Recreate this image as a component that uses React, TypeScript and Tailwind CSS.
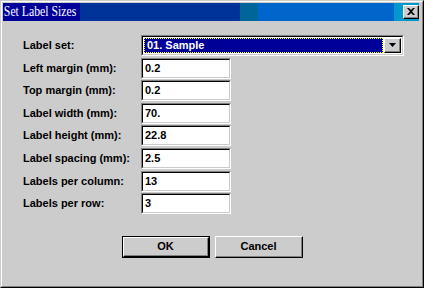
import React from "react";

const labelCls =
  "text-[11px] font-bold text-black leading-none whitespace-nowrap flex items-center";
const font = { fontFamily: '"Liberation Sans", Arial, sans-serif' };

function Field({ value }: { value: string }) {
  return (
    <div className="w-[90px] h-[21px] border-t border-l border-[#808080] border-r border-b border-r-white border-b-white">
      <div className="w-full h-full bg-white border-t border-l border-black border-r border-b border-r-[#cccccc] border-b-[#cccccc] flex items-center pl-[2px] text-[11px] font-bold text-black leading-none">
        {value}
      </div>
    </div>
  );
}

function Button({ label, def }: { label: string; def?: boolean }) {
  return (
    <div className={"w-[88px] h-[22px] " + (def ? "border border-black" : "")}>
      <div className="w-full h-full border-t border-l border-white border-r border-b border-r-black border-b-black">
        <div className="w-full h-full border-r border-b border-[#808080] flex items-center justify-center text-[11px] font-bold text-black leading-none">
          {label}
        </div>
      </div>
    </div>
  );
}

export default function App() {
  const rows: [string, string][] = [
    ["Left margin (mm):", "0.2"],
    ["Top margin (mm):", "0.2"],
    ["Label width (mm):", "70."],
    ["Label height (mm):", "22.8"],
    ["Label spacing (mm):", "2.5"],
    ["Labels per column:", "13"],
    ["Labels per row:", "3"],
  ];
  return (
    <div
      className="w-[424px] h-[288px] bg-[#cccccc] border-t border-l border-[#cccccc] border-r border-b border-r-black border-b-black"
      style={font}
    >
      <div className="w-full h-full border-t border-l border-white border-r border-b border-r-[#808080] border-b-[#808080] pt-px pl-px pr-[3px] flex flex-col">
        {/* Title bar */}
        <div className="h-[18px] flex w-full">
          <div className="w-[77px] bg-[#000099] flex items-center overflow-hidden">
            <span
              className="text-white text-[14px] leading-none pl-[1px] origin-left scale-x-[0.84] whitespace-nowrap"
              style={{ fontFamily: '"Liberation Serif", "Times New Roman", serif' }}
            >
              Set Label Sizes
            </span>
          </div>
          <div className="w-[160px] bg-[#003399]" />
          <div className="w-[18px] bg-[#006699]" />
          <div className="w-[136px] bg-[#0066cc]" />
          <div className="flex-1 bg-[#0099cc] flex items-center justify-end">
            <div className="w-[16px] h-[14px] bg-[#cccccc] border-t border-l border-white border-r border-b border-r-black border-b-black">
              <div className="w-full h-full border-r border-b border-[#808080] flex items-center justify-center">
                <svg width="8" height="7" viewBox="0 0 8 7">
                  <path
                    d="M0 0h2l2 2 2-2h2L5 3.5 8 7H6L4 5 2 7H0l3-3.5z"
                    fill="black"
                  />
                </svg>
              </div>
            </div>
          </div>
        </div>

        {/* Form */}
        <div className="mt-[14px] pl-[20px] grid grid-cols-[118px_auto] gap-y-[1.6px]">
          <div className={labelCls}>Label set:</div>
          <div className="w-[263px] h-[21px] border-t border-l border-[#808080] border-r border-b border-r-white border-b-white">
            <div className="w-full h-full bg-white border-t border-l border-black border-r border-b border-r-[#cccccc] border-b-[#cccccc] flex items-center p-px">
              <div className="flex-1 h-full bg-[#000099] border border-dotted border-[#ffff00] flex items-center pl-[2px] text-[11px] font-bold text-white leading-none">
                01. Sample
              </div>
              <div className="w-[17px] h-full ml-[1px] bg-[#cccccc] border-t border-l border-white border-r border-b border-r-black border-b-black">
                <div className="w-full h-full border-r border-b border-[#808080] flex items-center justify-center">
                  <svg width="7" height="4" viewBox="0 0 7 4">
                    <path d="M0 0h7L3.5 4z" fill="black" />
                  </svg>
                </div>
              </div>
            </div>
          </div>
          {rows.map(([l, v]) => (
            <React.Fragment key={l}>
              <div className={labelCls}>{l}</div>
              <Field value={v} />
            </React.Fragment>
          ))}
        </div>

        {/* Buttons */}
        <div className="mt-[22px] flex justify-center gap-[5px] pl-[3px]">
          <Button label="OK" def />
          <Button label="Cancel" />
        </div>
      </div>
    </div>
  );
}
